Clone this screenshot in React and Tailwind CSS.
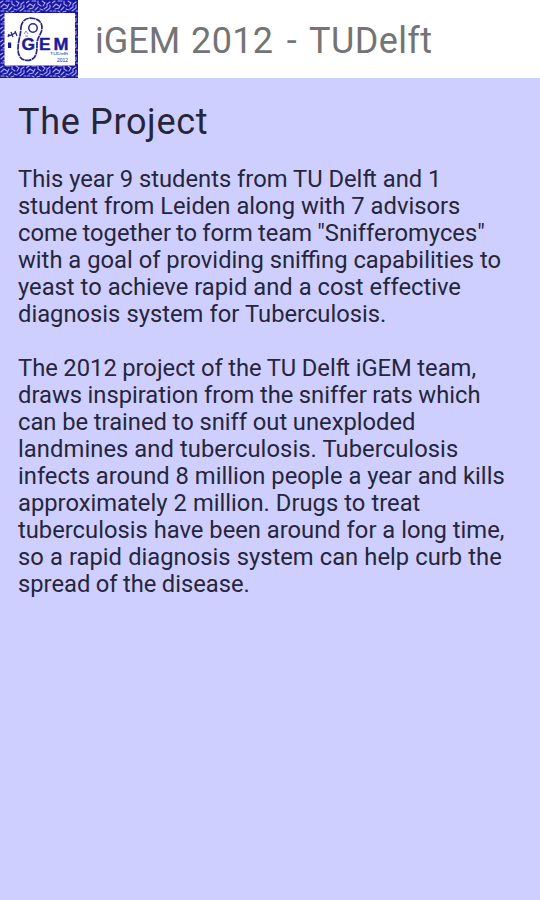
const first = [
    { text: 'This year 9 students from TU Delft and 1', gap: '[word-spacing:0px]' },
    { text: 'student from Leiden along with 7 advisors', gap: '[word-spacing:0px]' },
    { text: 'come together to form team "Snifferomyces"', gap: '[word-spacing:-0.8px]' },
    { text: 'with a goal of providing sniffing capabilities to', gap: '[word-spacing:0px]' },
    { text: 'yeast to achieve rapid and a cost effective', gap: '[word-spacing:0.1px]' },
    { text: 'diagnosis system for Tuberculosis.', gap: '[word-spacing:0.2px]' },
];

const second = [
    { text: 'The 2012 project of the TU Delft iGEM team,', gap: '[word-spacing:-0.4px]' },
    { text: 'draws inspiration from the sniffer rats which', gap: '[word-spacing:-0.4px]' },
    { text: 'can be trained to sniff out unexploded', gap: '[word-spacing:-0.2px]' },
    { text: 'landmines and tuberculosis. Tuberculosis', gap: 'tracking-[0.07px]' },
    { text: 'infects around 8 million people a year and kills', gap: '' },
    { text: 'approximately 2 million. Drugs to treat', gap: '[word-spacing:0.2px]' },
    { text: 'tuberculosis have been around for a long time,', gap: '' },
    { text: 'so a rapid diagnosis system can help curb the', gap: '[word-spacing:0.25px]' },
    { text: 'spread of the disease.', gap: '[word-spacing:-0.5px]' },
];

// The f of "Delft" sits close to its t
function Line({ text }) {
    const [before, after] = text.split('Delft');
    if (after === undefined) return text;
    return (
        <>
            {before}Del<span className="tracking-[-1.6px]">f</span>t{after}
        </>
    );
}

function Logo() {
    return (
        <svg className="shrink-0" width="78" height="78" viewBox="0 0 78 78">
            <defs>
                {/* maze texture of the frame */}
                <pattern id="maze" width="26" height="13" patternUnits="userSpaceOnUse">
                    <rect width="26" height="13" fill="#1616a2" />
                    <g fill="none" stroke="#aaaaee" strokeWidth="1.100" strokeLinecap="round">
                        <path d="M0 3l3-2M1 7l3-3 3 2M6 1h4M9 4L7 8l-4 1M12 1v3l3 2M12 7l-3 3M16 1l3 2-2 3M14 9l3 1M1 11h3M6 11l2 1M11 12l3-1M18 9l3-2v-3l3-2M24 5v3l-4 3M24 11h2" />
                    </g>
                </pattern>
            </defs>
            <rect width="78" height="78" fill="url(#maze)" />
            <rect x="4.500" y="13" width="70.500" height="52.500" fill="#fff" />
            {/* cell outline */}
            <g fill="none" stroke="#26268f">
                <path d="M21 27C22 20 27 17 34 18.500C41 20 43 25 41.500 31C40 36 37 38 37 44C37 51 37 59 29 60.300C21 61 18 56 18 49C18 43 19.500 38 20.500 33Z" strokeWidth="1.700" strokeDasharray="6 0.600" />
                <circle cx="33" cy="28" r="4.200" strokeWidth="1.500" />
                <path d="M24 34l2-3 2 3M25 36h3" stroke="#8888c4" strokeWidth="1" />
                <path d="M8 36l4-1 4-3M11 32l2 5M9 34l-1 3M15 31l2 5" strokeWidth="1.300" />
            </g>
            <rect x="8" y="42.500" width="3.200" height="5.500" fill="#1c1c98" />
            <g fill="#1c1c98" fontFamily="Liberation Sans, sans-serif">
                <g fontWeight="700" stroke="#1c1c98" strokeWidth="0.400">
                    <text x="21.500" y="49.900" fontSize="16" textLength="13.500" lengthAdjust="spacingAndGlyphs">G</text>
                    <text x="39" y="49.900" fontSize="16" textLength="11.500" lengthAdjust="spacingAndGlyphs">E</text>
                    <text x="53.500" y="49.900" fontSize="16" textLength="15" lengthAdjust="spacingAndGlyphs">M</text>
                </g>
                <text x="50" y="55.300" fontSize="3.600" textLength="18" lengthAdjust="spacingAndGlyphs">TUDelft</text>
                <text x="57" y="61.500" fontSize="4.500" textLength="11" lengthAdjust="spacingAndGlyphs">2012</text>
            </g>
        </svg>
    );
}

export default function App() {
    return (
        <div className="w-[540px] h-[900px] flex flex-col bg-[#cecfff] font-['Roboto',sans-serif] overflow-hidden">
            <header className="h-[78px] shrink-0 flex items-center bg-white">
                <Logo />
                <h1 className="ml-[17px] pt-[4px] text-[36px] leading-none text-[#747474] whitespace-nowrap">
                    <span>iGEM</span>{' '}
                    <span className="ml-[2px] tracking-[0.3px]">2012</span>{' '}
                    <span className="ml-[4.500px]">-</span>{' '}
                    <span className="ml-[3.500px] tracking-[0.4px]">TUDelft</span>
                </h1>
            </header>
            <main className="px-[18px] pt-[23px] text-[#26263a]">
                <h2 className="text-[36px] leading-[42px] tracking-[0.67px]">The Project</h2>
                {[first, second].map((lines, i) => (
                    <p key={i} className="mt-[23px] mb-[27px] text-[23.75px] leading-[27px]">
                        {lines.map(({ text, gap }) => (
                            <span key={text} className={`block whitespace-nowrap ${gap}`}>
                                <Line text={text} />
                            </span>
                        ))}
                    </p>
                ))}
            </main>
        </div>
    );
}
